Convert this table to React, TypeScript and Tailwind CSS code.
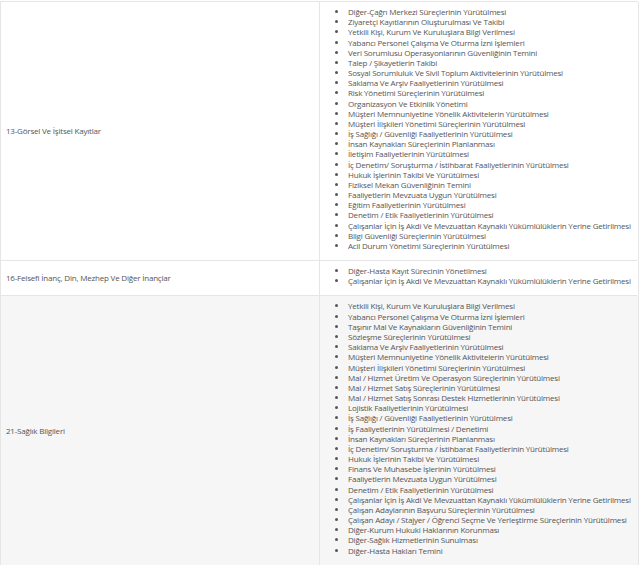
const rows: { label: string; items: string[]; bg: string }[] = [
  {
    label: "13-Görsel Ve İşitsel Kayıtlar",
    bg: "bg-white",
    items: [
      "Diğer-Çağrı Merkezi Süreçlerinin Yürütülmesi",
      "Ziyaretçi Kayıtlarının Oluşturulması Ve Takibi",
      "Yetkili Kişi, Kurum Ve Kuruluşlara Bilgi Verilmesi",
      "Yabancı Personel Çalışma Ve Oturma İzni İşlemleri",
      "Veri Sorumlusu Operasyonlarının Güvenliğinin Temini",
      "Talep / Şikayetlerin Takibi",
      "Sosyal Sorumluluk Ve Sivil Toplum Aktivitelerinin Yürütülmesi",
      "Saklama Ve Arşiv Faaliyetlerinin Yürütülmesi",
      "Risk Yönetimi Süreçlerinin Yürütülmesi",
      "Organizasyon Ve Etkinlik Yönetimi",
      "Müşteri Memnuniyetine Yönelik Aktivitelerin Yürütülmesi",
      "Müşteri İlişkileri Yönetimi Süreçlerinin Yürütülmesi",
      "İş Sağlığı / Güvenliği Faaliyetlerinin Yürütülmesi",
      "İnsan Kaynakları Süreçlerinin Planlanması",
      "İletişim Faaliyetlerinin Yürütülmesi",
      "İç Denetim/ Soruşturma / İstihbarat Faaliyetlerinin Yürütülmesi",
      "Hukuk İşlerinin Takibi Ve Yürütülmesi",
      "Fiziksel Mekan Güvenliğinin Temini",
      "Faaliyetlerin Mevzuata Uygun Yürütülmesi",
      "Eğitim Faaliyetlerinin Yürütülmesi",
      "Denetim / Etik Faaliyetlerinin Yürütülmesi",
      "Çalışanlar İçin İş Akdi Ve Mevzuattan Kaynaklı Yükümlülüklerin Yerine Getirilmesi",
      "Bilgi Güvenliği Süreçlerinin Yürütülmesi",
      "Acil Durum Yönetimi Süreçlerinin Yürütülmesi",
    ],
  },
  {
    label: "16-Felsefi İnanç, Din, Mezhep Ve Diğer İnançlar",
    bg: "bg-white",
    items: [
      "Diğer-Hasta Kayıt Sürecinin Yönetilmesi",
      "Çalışanlar İçin İş Akdi Ve Mevzuattan Kaynaklı Yükümlülüklerin Yerine Getirilmesi",
    ],
  },
  {
    label: "21-Sağlık Bilgileri",
    bg: "bg-[#f6f6f6]",
    items: [
      "Yetkili Kişi, Kurum Ve Kuruluşlara Bilgi Verilmesi",
      "Yabancı Personel Çalışma Ve Oturma İzni İşlemleri",
      "Taşınır Mal Ve Kaynakların Güvenliğinin Temini",
      "Sözleşme Süreçlerinin Yürütülmesi",
      "Saklama Ve Arşiv Faaliyetlerinin Yürütülmesi",
      "Müşteri Memnuniyetine Yönelik Aktivitelerin Yürütülmesi",
      "Müşteri İlişkileri Yönetimi Süreçlerinin Yürütülmesi",
      "Mal / Hizmet Üretim Ve Operasyon Süreçlerinin Yürütülmesi",
      "Mal / Hizmet Satış Süreçlerinin Yürütülmesi",
      "Mal / Hizmet Satış Sonrası Destek Hizmetlerinin Yürütülmesi",
      "Lojistik Faaliyetlerinin Yürütülmesi",
      "İş Sağlığı / Güvenliği Faaliyetlerinin Yürütülmesi",
      "İş Faaliyetlerinin Yürütülmesi / Denetimi",
      "İnsan Kaynakları Süreçlerinin Planlanması",
      "İç Denetim/ Soruşturma / İstihbarat Faaliyetlerinin Yürütülmesi",
      "Hukuk İşlerinin Takibi Ve Yürütülmesi",
      "Finans Ve Muhasebe İşlerinin Yürütülmesi",
      "Faaliyetlerin Mevzuata Uygun Yürütülmesi",
      "Denetim / Etik Faaliyetlerinin Yürütülmesi",
      "Çalışanlar İçin İş Akdi Ve Mevzuattan Kaynaklı Yükümlülüklerin Yerine Getirilmesi",
      "Çalışan Adaylarının Başvuru Süreçlerinin Yürütülmesi",
      "Çalışan Adayı / Stajyer / Öğrenci Seçme Ve Yerleştirme Süreçlerinin Yürütülmesi",
      "Diğer-Kurum Hukuki Haklarının Korunması",
      "Diğer-Sağlık Hizmetlerinin Sunulması",
      "Diğer-Hasta Hakları Temini",
    ],
  },
];

export default function App() {
  return (
    <div
      className="w-[640px] h-[565px] overflow-hidden bg-white text-[8px] tracking-[-0.2px] leading-[10.17px] text-[#555]"
      style={{ fontFamily: '"Open Sans", sans-serif' }}
    >
      <div className="w-[638px] border-t border-l border-[#e6e6e6] mt-px">
        {rows.map((row) => (
          <div key={row.label} className={`grid grid-cols-[319px_319px] border-b border-[#e6e6e6] ${row.bg}`}>
            <div className="flex items-center px-[5px] border-r border-[#e6e6e6]">{row.label}</div>
            <div className="pt-[5px] pb-[9px] pr-[5px] border-r border-[#e6e6e6]">
              <ul className="pl-[28px] list-disc marker:text-[#555] whitespace-nowrap">
                {row.items.map((it, i) => (
                  <li key={i}>{it}</li>
                ))}
              </ul>
            </div>
          </div>
        ))}
      </div>
    </div>
  );
}
